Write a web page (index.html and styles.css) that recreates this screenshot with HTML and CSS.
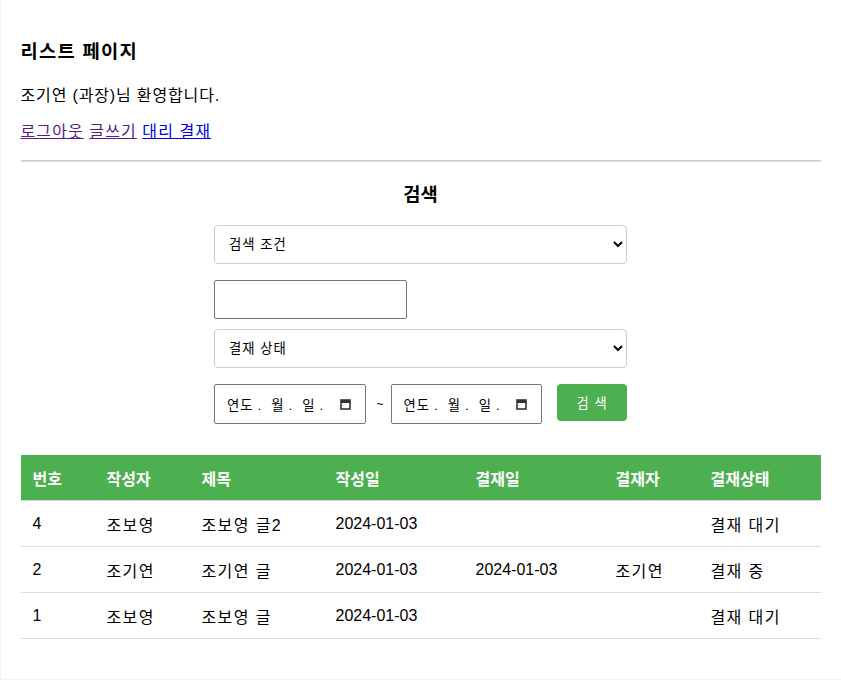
FILE: index.html
```html
<!DOCTYPE html>
<html lang="ko">
<head>
    <meta charset="UTF-8">
    <title>리스트 페이지</title>
    <link rel="stylesheet" href="styles.css">
</head>
<body>
    <div class="container">
        <h3 class="title">리스트 페이지</h3>
        <p class="welcome">조기연 (과장)님 환영합니다.</p>
        <p class="links">
            <a href="#" class="visited">로그아웃</a>
            <a href="#" class="visited">글쓰기</a>
            <a href="#">대리 결재</a>
        </p>
        <hr>

        <h3 class="center">검색</h3>
        <form class="search-form">
            <select class="cond">
                <option>검색 조건</option>
                <option>제목</option>
                <option>작성자</option>
            </select>
            <input type="text" class="keyword">
            <select class="status">
                <option>결재 상태</option>
                <option>결재 대기</option>
                <option>결재 중</option>
            </select>
            <div class="date-row">
                <div class="date-box">
                    <span class="date-text">연도<i>.</i>월<i>.</i>일<i>.</i></span>
                    <svg class="cal" width="11" height="12" viewBox="0 0 11 12">
                        <rect x="1" y="2" width="9" height="9" fill="none" stroke="#333" stroke-width="1.6"/>
                        <rect x="1" y="2" width="9" height="3" fill="#333"/>
                    </svg>
                </div>
                <span class="tilde">~</span>
                <div class="date-box">
                    <span class="date-text">연도<i>.</i>월<i>.</i>일<i>.</i></span>
                    <svg class="cal" width="11" height="12" viewBox="0 0 11 12">
                        <rect x="1" y="2" width="9" height="9" fill="none" stroke="#333" stroke-width="1.6"/>
                        <rect x="1" y="2" width="9" height="3" fill="#333"/>
                    </svg>
                </div>
                <button type="submit" class="search-btn">검 색</button>
            </div>
        </form>

        <table>
            <colgroup>
                <col style="width: 74px">
                <col style="width: 95px">
                <col style="width: 134px">
                <col style="width: 140px">
                <col style="width: 140px">
                <col style="width: 95px">
                <col>
            </colgroup>
            <thead>
                <tr>
                    <th>번호</th>
                    <th>작성자</th>
                    <th>제목</th>
                    <th>작성일</th>
                    <th>결재일</th>
                    <th>결재자</th>
                    <th>결재상태</th>
                </tr>
            </thead>
            <tbody>
                <tr>
                    <td class="num">4</td>
                    <td>조보영</td>
                    <td>조보영 글2</td>
                    <td class="num">2024-01-03</td>
                    <td></td>
                    <td></td>
                    <td>결재 대기</td>
                </tr>
                <tr>
                    <td class="num">2</td>
                    <td>조기연</td>
                    <td>조기연 글</td>
                    <td class="num">2024-01-03</td>
                    <td class="num">2024-01-03</td>
                    <td>조기연</td>
                    <td>결재 중</td>
                </tr>
                <tr>
                    <td class="num">1</td>
                    <td>조보영</td>
                    <td>조보영 글</td>
                    <td class="num">2024-01-03</td>
                    <td></td>
                    <td></td>
                    <td>결재 대기</td>
                </tr>
            </tbody>
        </table>
    </div>
</body>
</html>
```

FILE: styles.css
```css
body {
    margin: 0;
    background: #f4f4f4;
    font-family: "Liberation Sans", "Noto Sans CJK KR", sans-serif;
    font-size: 16px;
    color: #000;
}
.container {
    max-width: 800px;
    margin: 0 auto;
    padding: 20px 20px 40px;
    background: white;
}
h3 {
    font-size: 18.72px;
    line-height: 26px;
    margin: 18.72px 0;
}
h3.title {
    margin-bottom: 21px;
    letter-spacing: 1.3px;
}
h3.center {
    text-align: center;
    margin-bottom: 17.7px;
}
p {
    margin: 16px 0;
    line-height: 20px;
}
.welcome {
    letter-spacing: 0.85px;
}
.links {
    letter-spacing: 1.1px;
}
a {
    color: #0000ee;
}
a.visited {
    color: #551a8b;
}
hr {
    border: 0;
    border-top: 1px solid #ccc;
    border-bottom: 1px solid #ddd;
    margin: 18px 0 20px;
}
.search-form {
    width: 413px;
    margin: 0 auto;
    display: flex;
    flex-direction: column;
    align-items: flex-start;
}
select {
    width: 100%;
    height: 39px;
    padding: 0 10px;
    border: 1px solid #ccc;
    border-radius: 4px;
    background: white;
    font-family: inherit;
    font-size: 13.33px;
    letter-spacing: 1px;
    color: #000;
}
.cond {
    margin-bottom: 16px;
}
.keyword {
    box-sizing: border-box;
    width: 193px;
    height: 39px;
    padding: 0 10px;
    border: 1px solid #767676;
    border-radius: 2px;
    margin: 0 0 10px;
    font-size: 13.33px;
}
.status {
    margin-bottom: 16px;
}
.date-row {
    display: flex;
    align-items: flex-start;
    width: 100%;
}
.date-box {
    box-sizing: border-box;
    width: 152px;
    height: 40px;
    border: 1px solid #767676;
    border-radius: 2px;
    display: flex;
    align-items: center;
    justify-content: space-between;
    padding: 0 14px 0 12px;
    font-size: 13.33px;
    letter-spacing: 1px;
}
.date-text i {
    font-style: normal;
    margin: 0 9px 0 4px;
}
.cal {
    display: block;
}
.tilde {
    width: 25px;
    padding-left: 4px;
    box-sizing: border-box;
    text-align: center;
    font-size: 12px;
    line-height: 40px;
}
.search-btn {
    margin-left: 15px;
    width: 70px;
    height: 37px;
    background: #4caf50;
    color: white;
    border: none;
    border-radius: 4px;
    font-family: inherit;
    font-size: 13.33px;
    letter-spacing: 1px;
    cursor: pointer;
}
table {
    width: 100%;
    border-collapse: collapse;
    table-layout: fixed;
    margin-top: 31px;
}
th, td {
    text-align: left;
    padding: 0 12px;
    border-bottom: 1px solid #ddd;
    white-space: nowrap;
}
th {
    height: 45px;
    background: #4caf50;
    color: white;
    font-weight: bold;
}
td {
    height: 45px;
    letter-spacing: 1.4px;
}
td.num {
    letter-spacing: 0;
}
```
